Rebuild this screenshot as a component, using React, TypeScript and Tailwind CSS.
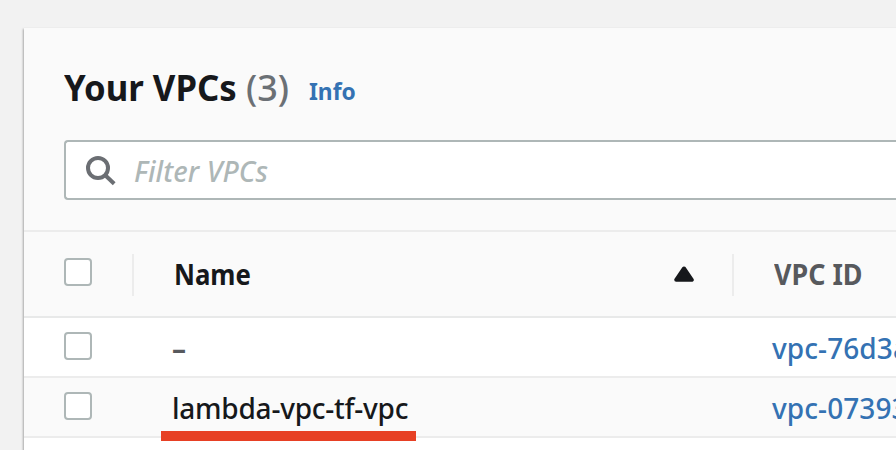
import React from "react";

function Checkbox() {
  return <span className="block h-7 w-7 rounded-[4px] border-2 border-[#aeb7b7] bg-white" />;
}

function SearchIcon() {
  return (
    <svg className="ml-[19px] h-8 w-8 shrink-0" viewBox="0 0 32 32" fill="none" stroke="#6b6e73" strokeWidth="4">
      <circle cx="13" cy="14" r="10" />
      <path d="M20 21L29.2 29.7" />
    </svg>
  );
}

function Row({ name, id, tone, children }: { name: React.ReactNode; id: string; tone: string; children?: React.ReactNode }) {
  return (
    <div className={`flex h-[60px] shrink-0 border-b-2 border-[#ececec] ${tone}`}>
      <div className="w-[148px] pt-[14px] pl-10">
        <Checkbox />
      </div>
      <div className="relative w-[600px] leading-[60px] font-medium tracking-[-0.24px] text-[#16181b]">
        {name}
        {children}
      </div>
      <div className="leading-[60px] font-medium tracking-[0.08px] text-[#3472b3]">{id}</div>
    </div>
  );
}

export default function App() {
  return (
    <div className="flex h-[450px] w-[896px] overflow-hidden bg-[#f2f2f2] pt-7 pl-6 font-['Noto_Sans','Open_Sans',sans-serif] text-[28px] whitespace-nowrap">
      <main className="flex flex-1 flex-col bg-white shadow-[0_2px_2px_1px_rgba(0,0,0,0.3)]">
        <header className="flex h-[204px] shrink-0 flex-col border-b-2 border-[#ececec] bg-[#fafafa] pl-10">
          <div className="flex h-28 items-baseline pt-[35px] leading-[50px]">
            <h1 className="w-[182px] text-[36px] font-bold text-[#16181b]">
              <span className="inline-block origin-left scale-x-[0.965]">Your VPCs</span>
            </h1>
            <span className="w-[63px] text-[36px] font-medium text-[#6b7075]">(3)</span>
            <a className="relative -top-px inline-block origin-left scale-x-[0.95] text-[24px] font-bold text-[#3472b3]">Info</a>
          </div>
          <div className="flex h-[60px] items-center rounded-l-[4px] border-2 border-r-0 border-[#aeb7b7] bg-white">
            <SearchIcon />
            <span className="ml-[17px] pt-[2px] font-medium tracking-[0.1px] text-[#aeb7b7] italic">Filter VPCs</span>
          </div>
        </header>
        <div className="flex h-[86px] shrink-0 items-center border-b-2 border-[#e8e9e9] bg-[#fafafa] pt-0.5 font-bold">
          <div className="flex h-[42px] w-[110px] items-center border-r-2 border-[#ececec] pb-1.5 pl-10">
            <Checkbox />
          </div>
          <div className="flex h-[42px] w-[600px] items-center justify-between border-r-2 border-[#ececec] pr-[38px] pb-0.5 pl-10 text-[#16181b]">
            <span className="origin-left scale-x-[0.92]">Name</span>
            <svg className="h-4 w-5" viewBox="0 0 20 16" fill="#16181b" stroke="#16181b" strokeWidth="4" strokeLinejoin="round">
              <path d="M10 2.5L17.8 13.8H2.2Z" />
            </svg>
          </div>
          <span className="origin-[40px_50%] scale-x-[0.96] pb-0.5 pl-10 text-[#57595d]">VPC ID</span>
        </div>
        <Row name={<span className="font-bold text-[#57595d]">–</span>} id="vpc-76d3a" tone="bg-white" />
        <Row name="lambda-vpc-tf-vpc" id="vpc-07393" tone="bg-[#fafafa]">
          <span className="absolute top-[53px] -left-[11px] h-[10px] w-[255px] bg-[#e74024]" />
        </Row>
      </main>
    </div>
  );
}
